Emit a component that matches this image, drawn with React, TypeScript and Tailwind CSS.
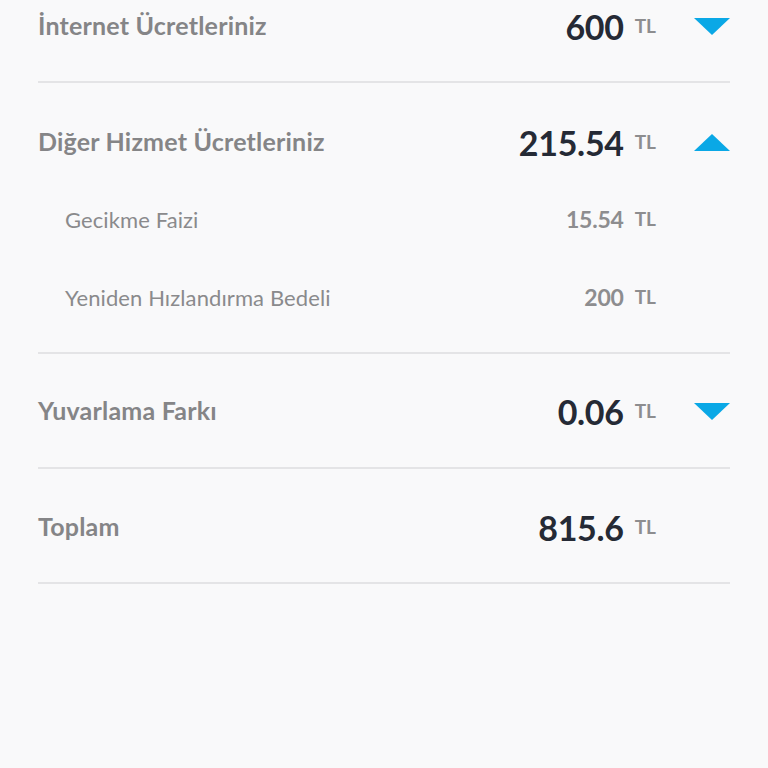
import React from "react";

const font = { fontFamily: "Lato, 'Noto Sans', sans-serif" };

function Caret({ up }: { up?: boolean }) {
  return (
    <svg width="36" height="17" viewBox="0 0 36 17" className="block">
      {up ? (
        <polygon points="0,17 36,17 18,0" fill="#0aa8e6" />
      ) : (
        <polygon points="0,0 36,0 18,17" fill="#0aa8e6" />
      )}
    </svg>
  );
}

function Amount({ value, sub }: { value: string; sub?: boolean }) {
  return (
    <div className="flex items-center">
      <span
        className={
          sub
            ? "text-[23px] font-bold text-[#8d8d8f] tracking-[-0.2px]"
            : "text-[34px] font-bold text-[#252a35] tracking-[-0.3px]"
        }
      >
        {value}
      </span>
      <span className="ml-[11px] text-[19px] font-bold text-[#8d8d8f]">TL</span>
    </div>
  );
}

function HeaderRow({ title, value, caret }: { title: string; value: string; caret?: "up" | "down" }) {
  return (
    <div className="flex h-[52px] items-center justify-between">
      <span className="text-[25px] font-bold text-[#858587] tracking-[0.2px]">{title}</span>
      <div className="flex items-center">
        <Amount value={value} />
        <div className="ml-[38px] w-[36px] flex justify-end">
          {caret ? <Caret up={caret === "up"} /> : null}
        </div>
      </div>
    </div>
  );
}

function SubRow({ title, value }: { title: string; value: string }) {
  return (
    <div className="flex h-[78px] items-center justify-between pl-[27px]">
      <span className="text-[22px] font-normal text-[#8a8a8c] tracking-[0.1px]">{title}</span>
      <div className="flex items-center">
        <Amount value={value} sub />
        <div className="ml-[38px] w-[36px]" />
      </div>
    </div>
  );
}

export default function App() {
  return (
    <div className="min-h-[768px] w-full bg-[#f9f9fa]" style={font}>
      <div className="px-[38px]">
        <div className="border-b-2 border-[#e4e4e6] pb-[29px]">
          <HeaderRow title="İnternet Ücretleriniz" value="600" caret="down" />
        </div>
        <div className="border-b-2 border-[#e4e4e6] pt-[33px] pb-[16px]">
          <HeaderRow title="Diğer Hizmet Ücretleriniz" value="215.54" caret="up" />
          <div className="pt-[12px]">
            <SubRow title="Gecikme Faizi" value="15.54" />
            <SubRow title="Yeniden Hızlandırma Bedeli" value="200" />
          </div>
        </div>
        <div className="border-b-2 border-[#e4e4e6] pt-[31px] pb-[30px]">
          <HeaderRow title="Yuvarlama Farkı" value="0.06" caret="down" />
        </div>
        <div className="border-b-2 border-[#e4e4e6] pt-[32px] pb-[29px]">
          <HeaderRow title="Toplam" value="815.6" />
        </div>
      </div>
    </div>
  );
}
